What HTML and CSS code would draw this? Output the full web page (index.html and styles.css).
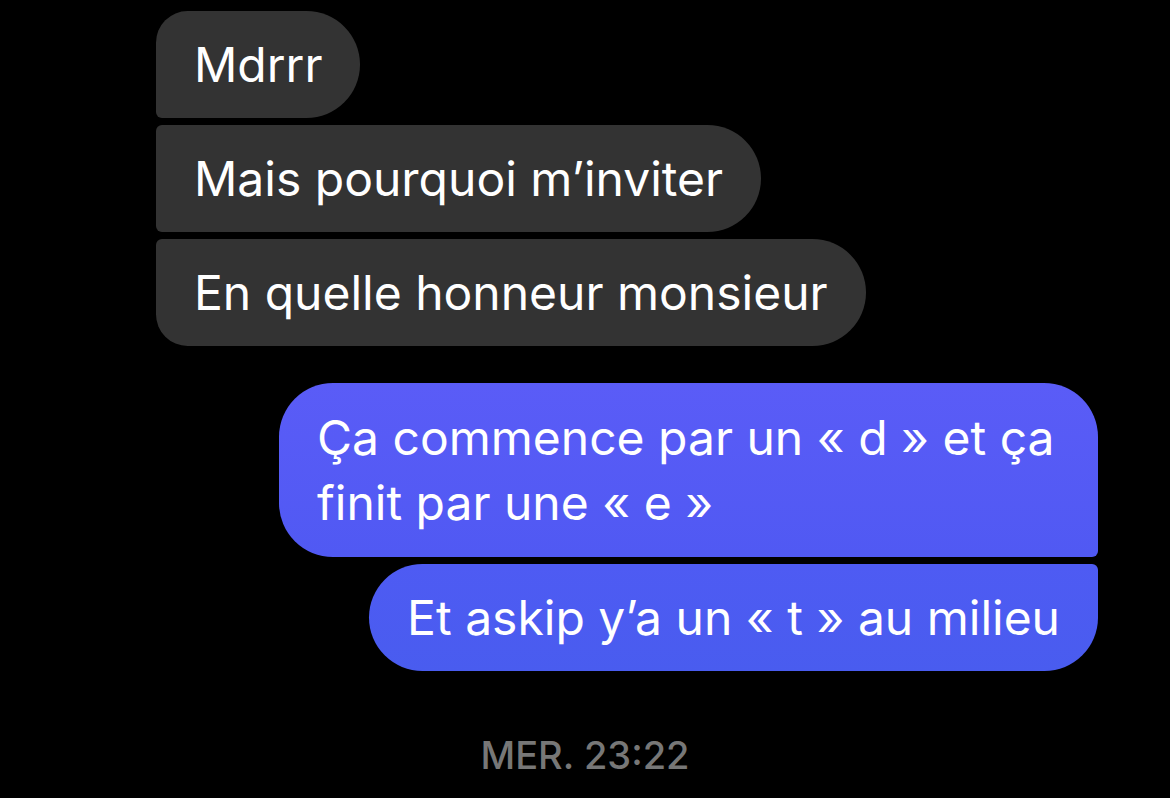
FILE: index.html
```html
<!DOCTYPE html>
<html lang="fr">

<head>
    <meta charset="UTF-8">
    <meta name="viewport" content="width=device-width, initial-scale=1.0">
    <title>Messages</title>
    <link rel="stylesheet" href="styles.css">
</head>

<body>
    <div class="thread">
        <div class="group theirs">
            <div class="bubble first">Mdrrr</div>
            <div class="bubble">Mais pourquoi m’inviter</div>
            <div class="bubble last">En quelle honneur monsieur</div>
        </div>

        <div class="group mine">
            <div class="bubble first">Ça commence par un « d » et ça finit par une « e »</div>
            <div class="bubble last">Et askip y’a un « t » au milieu</div>
        </div>

        <div class="timestamp">MER. 23:22</div>
    </div>
</body>

</html>
```

FILE: styles.css
```css
body {
    margin: 0;
    background-color: #000;
    font-family: Inter, "Open Sans", sans-serif;
    color: white;
}

.thread {
    display: flex;
    flex-direction: column;
    padding-top: 11px;
}

.group {
    display: flex;
    flex-direction: column;
    gap: 7px;
}

.bubble {
    box-sizing: border-box;
    font-size: 48px;
    line-height: 65px;
    padding: 21px 38px;
}

/* incoming */
.theirs {
    align-items: flex-start;
    margin-left: 156px;
}

.theirs .bubble {
    background-color: #333333;
    border-radius: 6px 54px 54px 6px;
}

.theirs .bubble.first {
    border-top-left-radius: 32px;
}

.theirs .bubble.last {
    border-bottom-left-radius: 32px;
}

/* outgoing */
.mine {
    align-items: flex-end;
    margin-right: 72px;
    margin-top: 37px;
}

.mine .bubble {
    max-width: 819px;
    border-radius: 54px 6px 6px 54px;
}

.mine .bubble.first {
    background: linear-gradient(#5a5cf7, #5059f3);
    border-top-right-radius: 54px;
    padding: 22px 38px;
}

.mine .bubble.last {
    background: linear-gradient(#4e5bf3, #495cef);
    border-bottom-right-radius: 54px;
}

.timestamp {
    align-self: center;
    margin-top: 61px;
    font-size: 38px;
    line-height: 46px;
    font-weight: 500;
    color: #777777;
}
```
